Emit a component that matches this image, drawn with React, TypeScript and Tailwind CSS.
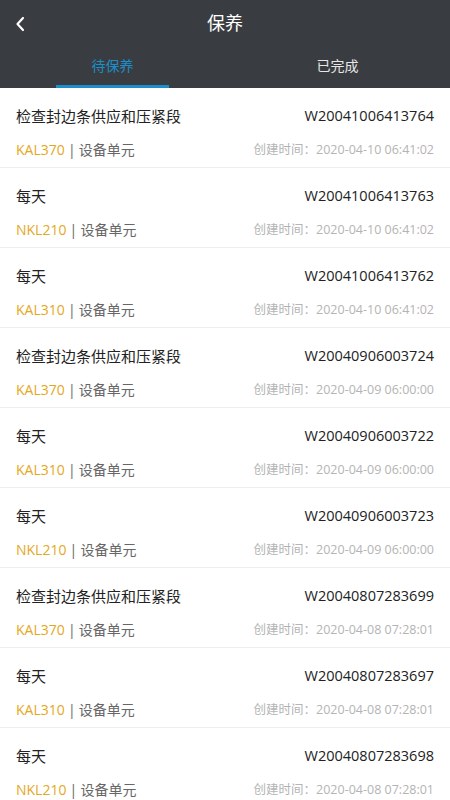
import React from "react";

const rows = [
  ["检查封边条供应和压紧段", "W20041006413764", "KAL370", "2020-04-10 06:41:02"],
  ["每天", "W20041006413763", "NKL210", "2020-04-10 06:41:02"],
  ["每天", "W20041006413762", "KAL310", "2020-04-10 06:41:02"],
  ["检查封边条供应和压紧段", "W20040906003724", "KAL370", "2020-04-09 06:00:00"],
  ["每天", "W20040906003722", "KAL310", "2020-04-09 06:00:00"],
  ["每天", "W20040906003723", "NKL210", "2020-04-09 06:00:00"],
  ["检查封边条供应和压紧段", "W20040807283699", "KAL370", "2020-04-08 07:28:01"],
  ["每天", "W20040807283697", "KAL310", "2020-04-08 07:28:01"],
  ["每天", "W20040807283698", "NKL210", "2020-04-08 07:28:01"],
];

export default function App() {
  return (
    <div
      className="w-[450px] h-[800px] overflow-hidden bg-white"
      style={{ fontFamily: '"Open Sans", "Noto Sans CJK SC", sans-serif' }}
    >
      <div className="bg-[#393d41]">
        <div className="relative h-[46px] flex items-center justify-center">
          <svg className="absolute left-[15px] top-[16px]" width="11" height="16" viewBox="0 0 11 16">
            <path d="M8 2 L2.5 8 L8 14" stroke="#fff" strokeWidth="2.2" fill="none" strokeLinecap="round" strokeLinejoin="round" />
          </svg>
          <span className="text-[18px] text-white">保养</span>
        </div>
        <div className="flex h-[42px]">
          <div className="flex-1 flex flex-col items-center">
            <div className="flex-1 flex items-center text-[14px] text-[#1b8fc9]">待保养</div>
            <div className="w-[113px] h-[3px] bg-[#1b8fc9]" />
          </div>
          <div className="flex-1 flex flex-col items-center">
            <div className="flex-1 flex items-center text-[14px] text-[#e6e6e6]">已完成</div>
            <div className="h-[3px]" />
          </div>
        </div>
      </div>
      {rows.map((r, i) => (
        <div key={i} className="h-[80px] border-b border-[#eeeeee] px-4 flex flex-col">
          <div className="flex justify-between items-center h-[28px] mt-[14px] text-[#222]">
            <span className="text-[15px] leading-[20px]">{r[0]}</span>
            <span className="text-[14.5px] leading-[20px]">{r[1]}</span>
          </div>
          <div className="flex justify-between items-center h-[28px] mt-[6px]">
            <div className="flex items-baseline text-[14px] leading-[20px] text-[#666]">
              <span className="text-[#e5a823]">{r[2]}</span>
              <span className="w-[14px] text-center">|</span>
              <span>设备单元</span>
            </div>
            <span className="text-[12.5px] leading-[20px] text-[#b4b4b4]">创建时间：{r[3]}</span>
          </div>
        </div>
      ))}
    </div>
  );
}
